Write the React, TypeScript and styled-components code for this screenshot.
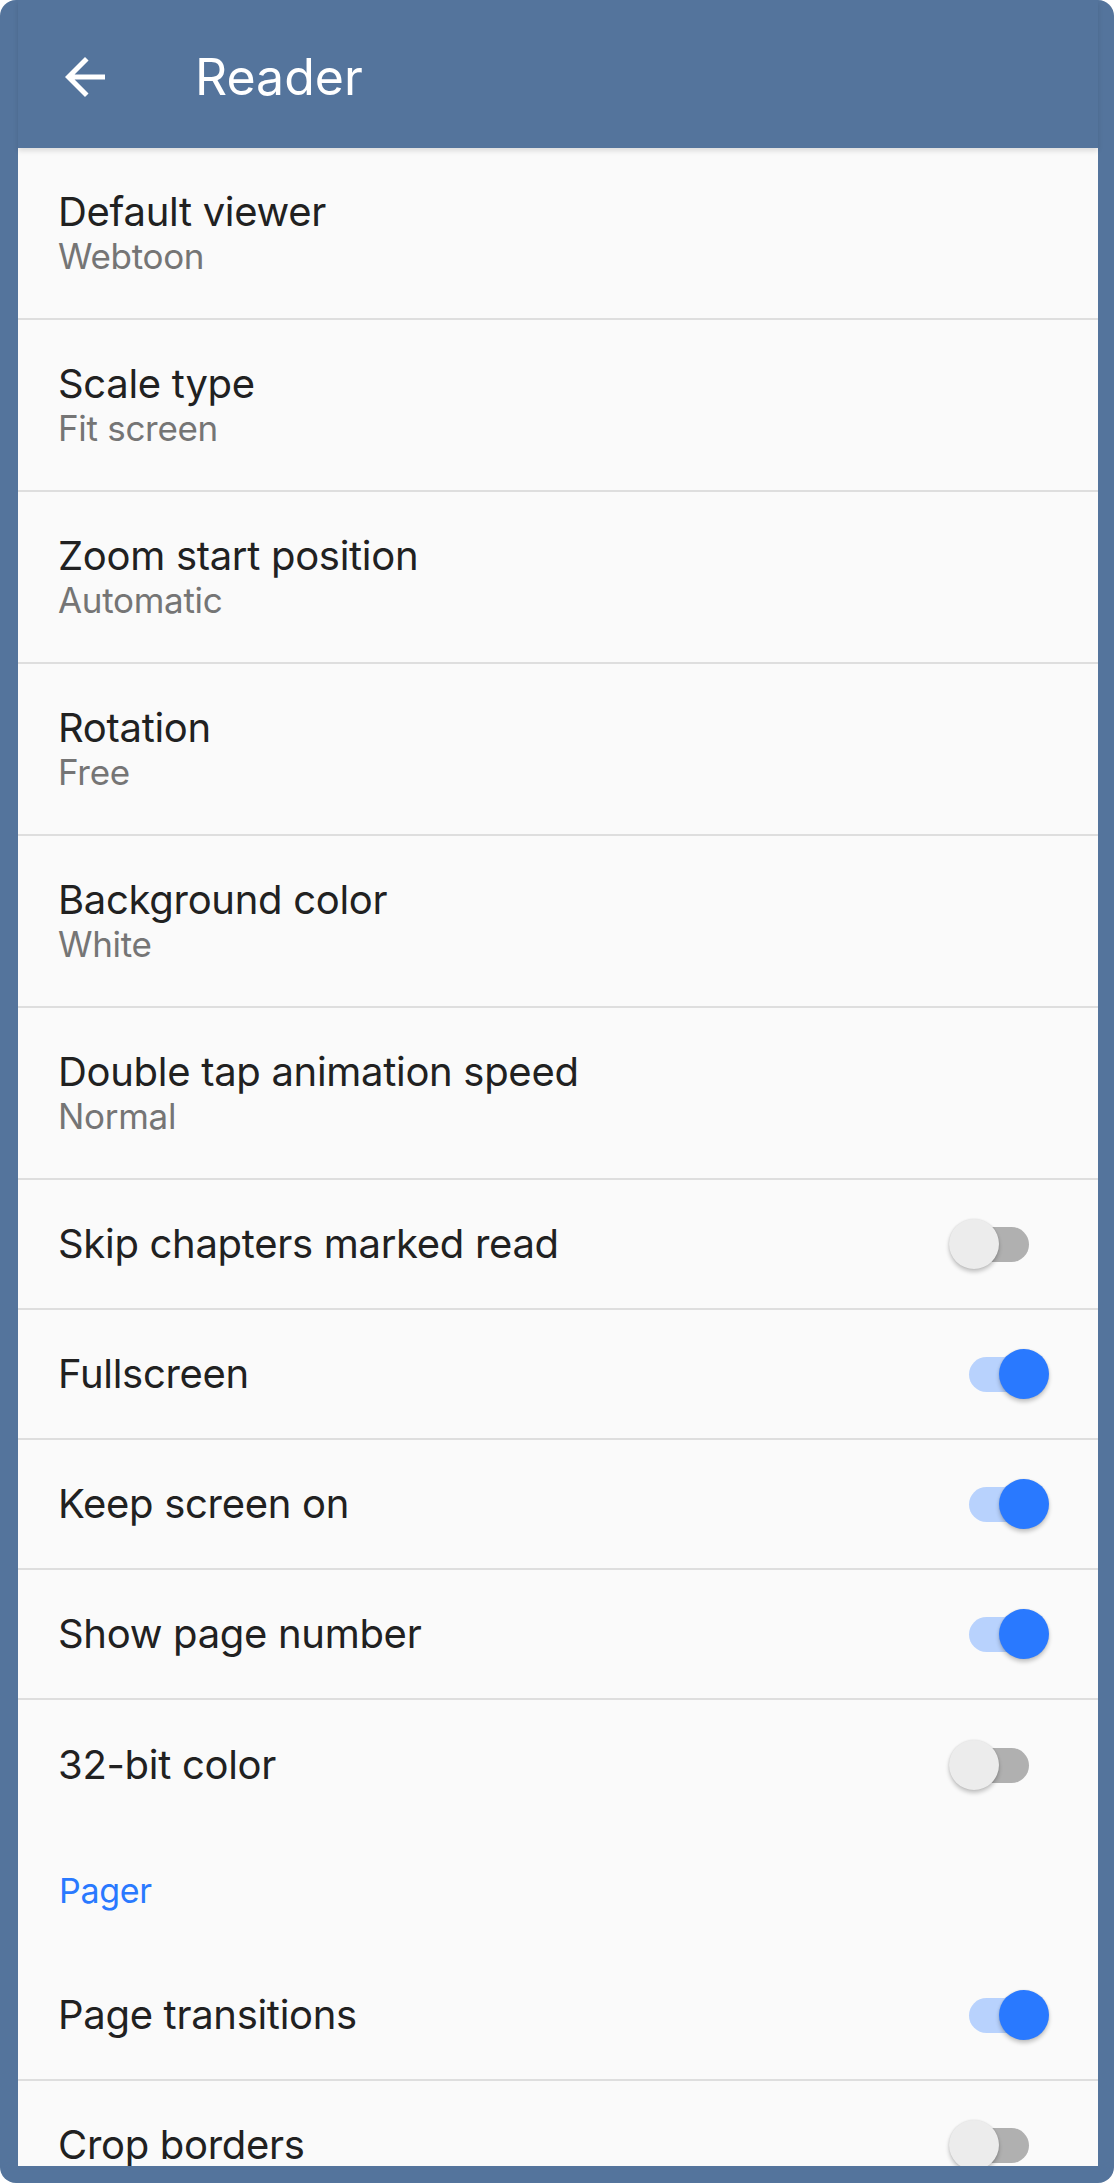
import React from 'react';
import styled, { createGlobalStyle } from 'styled-components';

const GlobalStyle = createGlobalStyle`
  html, body { margin: 0; padding: 0; background: #ffffff; }
  body { font-family: Inter, "Noto Sans", sans-serif; -webkit-font-smoothing: antialiased; }
  * { box-sizing: border-box; }
`;

const Frame = styled.div`
  width: 1114px;
  height: 2183px;
  background: #54749c;
  border-radius: 16px;
  padding: 0 16px 17px 18px;
  display: flex;
  flex-direction: column;
  overflow: hidden;
`;

const AppBar = styled.header`
  height: 148px;
  flex: none;
  display: flex;
  align-items: center;
  padding-top: 5px;
  position: relative;
  z-index: 1;
  box-shadow: 0 3px 5px rgba(0, 0, 0, 0.12);
  background: #54749c;
`;

const BackButton = styled.button`
  width: 60px;
  height: 60px;
  margin-left: 37px;
  padding: 0;
  border: 0;
  background: transparent;
  display: flex;
  align-items: center;
  justify-content: center;
  color: #ffffff;
`;

const Title = styled.h1`
  margin: 0 0 0 80px;
  font-size: 50px;
  font-weight: 400;
  color: #ffffff;
  letter-spacing: 0;
`;

const Content = styled.main`
  flex: 1;
  background: #fafafa;
  overflow: hidden;
`;

const Row = styled.div<{ $tall?: boolean; $last?: boolean }>`
  height: ${(p) => (p.$tall ? 172 : 130)}px;
  display: flex;
  align-items: center;
  padding: 0 49px 0 40px;
  border-bottom: ${(p) => (p.$last ? 'none' : '2px solid #dedede')};
`;

const TextBlock = styled.div`
  flex: 1;
  display: flex;
  flex-direction: column;
`;

const RowTitle = styled.div`
  font-size: 40px;
  line-height: 46px;
  letter-spacing: -0.3px;
  color: #212121;
`;

const RowSummary = styled.div`
  font-size: 35px;
  line-height: 42px;
  letter-spacing: -0.3px;
  color: #757575;
`;

const Category = styled.div`
  height: 121px;
  display: flex;
  align-items: center;
  padding-left: 41px;
  font-size: 34px;
  letter-spacing: -0.3px;
  color: #2979ff;
`;

const SwitchRoot = styled.div`
  position: relative;
  width: 100px;
  height: 50px;
  flex: none;
`;

const Track = styled.div<{ $on: boolean }>`
  position: absolute;
  left: 20px;
  top: 8px;
  width: 60px;
  height: 35px;
  border-radius: 18px;
  background: ${(p) => (p.$on ? '#b8d2fd' : '#b0b0b0')};
`;

const Thumb = styled.div<{ $on: boolean }>`
  position: absolute;
  top: 0;
  left: ${(p) => (p.$on ? 50 : 0)}px;
  width: 50px;
  height: 50px;
  border-radius: 50%;
  background: ${(p) => (p.$on ? '#2979ff' : '#ececec')};
  box-shadow: 0 3px 4px rgba(0, 0, 0, 0.22), 0 0 2px rgba(0, 0, 0, 0.12);
`;

const Switch = ({ on }: { on: boolean }) => (
  <SwitchRoot>
    <Track $on={on} />
    <Thumb $on={on} />
  </SwitchRoot>
);

const ArrowBack = () => (
  <svg width="60" height="60" viewBox="0 0 24 24" fill="currentColor">
    <path d="M20 11H7.83l5.59-5.59L12 4l-8 8 8 8 1.41-1.41L7.83 13H20v-2z" />
  </svg>
);

type Item =
  | { kind: 'list'; title: string; summary: string }
  | { kind: 'switch'; title: string; on: boolean; last?: boolean }
  | { kind: 'category'; title: string };

const items: Item[] = [
  { kind: 'list', title: 'Default viewer', summary: 'Webtoon' },
  { kind: 'list', title: 'Scale type', summary: 'Fit screen' },
  { kind: 'list', title: 'Zoom start position', summary: 'Automatic' },
  { kind: 'list', title: 'Rotation', summary: 'Free' },
  { kind: 'list', title: 'Background color', summary: 'White' },
  { kind: 'list', title: 'Double tap animation speed', summary: 'Normal' },
  { kind: 'switch', title: 'Skip chapters marked read', on: false },
  { kind: 'switch', title: 'Fullscreen', on: true },
  { kind: 'switch', title: 'Keep screen on', on: true },
  { kind: 'switch', title: 'Show page number', on: true },
  { kind: 'switch', title: '32-bit color', on: false, last: true },
  { kind: 'category', title: 'Pager' },
  { kind: 'switch', title: 'Page transitions', on: true },
  { kind: 'switch', title: 'Crop borders', on: false },
];

export default function App() {
  return (
    <>
      <GlobalStyle />
      <Frame>
        <AppBar>
          <BackButton aria-label="Back">
            <ArrowBack />
          </BackButton>
          <Title>Reader</Title>
        </AppBar>
        <Content>
          {items.map((it) => {
            if (it.kind === 'category') return <Category key={it.title}>{it.title}</Category>;
            if (it.kind === 'list')
              return (
                <Row key={it.title} $tall>
                  <TextBlock>
                    <RowTitle>{it.title}</RowTitle>
                    <RowSummary>{it.summary}</RowSummary>
                  </TextBlock>
                </Row>
              );
            return (
              <Row key={it.title} $last={it.last}>
                <TextBlock>
                  <RowTitle>{it.title}</RowTitle>
                </TextBlock>
                <Switch on={it.on} />
              </Row>
            );
          })}
        </Content>
      </Frame>
    </>
  );
}
